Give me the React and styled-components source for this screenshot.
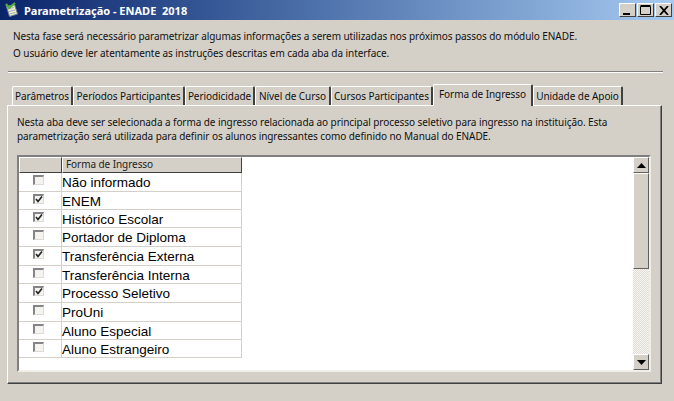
import React from "react";
import styled, { createGlobalStyle } from "styled-components";

const GlobalStyle = createGlobalStyle`
  html, body { margin: 0; padding: 0; background: #d4d0c8; }
  * { box-sizing: border-box; }
`;

const Window = styled.div`
  width: 674px;
  height: 401px;
  overflow: hidden;
  background: #d4d0c8;
  font-family: "Noto Sans", Tahoma, sans-serif;
  font-size: 10px;
  letter-spacing: -0.07px;
  color: #111;
  display: flex;
  flex-direction: column;
`;

const TitleBar = styled.div`
  height: 20px;
  flex: none;
  display: flex;
  align-items: center;
  padding: 0 2px 0 4px;
  background: linear-gradient(90deg, #0a246a 0%, #4a6ea8 45%, #a6caf0 100%);
  color: #fff;
  font-weight: bold;
  font-size: 11px;
  letter-spacing: 0;
`;

const TitleText = styled.span`
  margin-left: 4px;
  flex: 1;
  white-space: pre;
`;

const WinButtons = styled.div`
  display: flex;
  gap: 1px;
`;

const WinButton = styled.div`
  width: 17px;
  height: 14px;
  background: #d4d0c8;
  border: 1px solid;
  border-color: #fff #404040 #404040 #fff;
  display: flex;
  align-items: center;
  justify-content: center;
`;

const Intro = styled.div`
  padding: 8px 13px 0;
  line-height: 17px;
  height: 51px;
  flex: none;
  white-space: nowrap;
`;

const Divider = styled.div`
  flex: none;
  margin: 0 11px 0 8px;
  height: 2px;
  background: #808080;
  border-bottom: 1px solid #fff;
`;

const TabArea = styled.div`
  flex: none;
  margin: 10px 12px 0 7px;
`;

const TabRow = styled.div`
  display: flex;
  height: 22px;
  align-items: flex-end;
  padding-left: 5px;
`;

const Tab = styled.div`
  width: ${(p) => p.$w}px;
  height: 19px;
  flex: none;
  background: #d4d0c8;
  border-top: 1px solid #fff;
  border-left: 1px solid #fff;
  border-right: 2px solid #404040;
  border-radius: 2px 2px 0 0;
  line-height: 18px;
  text-align: center;
  white-space: nowrap;
  position: relative;
  ${(p) => p.$active && "margin-bottom: -1px; line-height: 19px; height: 22px; z-index: 1;"}
`;

const Panel = styled.div`
  height: 279px;
  background: #d4d0c8;
  border: 1px solid;
  border-color: #fff #404040 #404040 #fff;
  box-shadow: inset -1px -1px 0 #808080;
  padding: 9px 10px 0 9px;
`;

const PanelText = styled.div`
  line-height: 14px;
  height: 40px;
  white-space: nowrap;
`;

const ListBox = styled.div`
  height: 217px;
  display: flex;
  background: #fff;
  border: 2px solid;
  border-color: #808080 #f0eee8 #f0eee8 #808080;
`;

const ListBody = styled.div`
  flex: 1;
  min-width: 0;
`;

const Grid = styled.div`
  width: 223px;
  display: grid;
  grid-template-columns: 43px 180px;
`;

const HeadCell = styled.div`
  height: 16px;
  background: #d4d0c8;
  border: 1px solid;
  border-color: #fff #404040 #404040 #fff;
  padding-left: 3px;
  line-height: 13px;
  color: #222;
`;

const CheckCell = styled.div`
  height: ${(p) => p.$h}px;
  border-bottom: 1px solid #d4d0c8;
  border-right: 1px solid #d4d0c8;
  display: flex;
  justify-content: center;
  padding: 2px 4px 0 0;
`;

const NameCell = styled.div`
  height: ${(p) => p.$h}px;
  border-bottom: 1px solid #d4d0c8;
  border-right: 1px solid #d4d0c8;
  font-family: "Liberation Sans", Arial, sans-serif;
  font-size: 13.5px;
  letter-spacing: 0;
  line-height: 20px;
  white-space: nowrap;
  color: #000;
`;

const Check = styled.div`
  width: 11px;
  height: 10px;
  background: #f4f3f0;
  border-style: solid;
  border-width: 2px 1px 1px 2px;
  border-color: #858585 #dedbd5 #dedbd5 #858585;
  display: flex;
  align-items: center;
  justify-content: center;
`;

const ScrollBar = styled.div`
  width: 16px;
  flex: none;
  display: flex;
  flex-direction: column;
  background: repeating-conic-gradient(#e0ddd6 0 25%, #f6f5f2 0 50%) 0 0 / 2px 2px;
`;

const ScrollButton = styled.div`
  height: 16px;
  flex: none;
  background: #d4d0c8;
  border: 1px solid;
  border-color: #fff #606060 #606060 #fff;
  display: flex;
  align-items: center;
  justify-content: center;
`;

const ScrollThumb = styled.div`
  height: 96px;
  flex: none;
  background: #d4d0c8;
  border: 1px solid;
  border-color: #fff #606060 #606060 #fff;
`;

const ScrollTrack = styled.div`
  flex: 1;
`;

const AppIcon = () => (
  <svg width="16" height="16" viewBox="0 0 16 16">
    <path d="M2.5 4.5l8-2 3 9.5-8 2.5z" fill="#f2ecc0" stroke="#6d7f9a" />
    <path d="M4 7l6-1.5M5 9.5l6-1.5M5.5 12l6-1.5" stroke="#9bb0c8" />
    <path d="M2 2l3 4 6-5" fill="none" stroke="#4fae3f" strokeWidth="2.2" />
  </svg>
);

const items = [
  ["Não informado", false, 19],
  ["ENEM", true, 18],
  ["Histórico Escolar", true, 18],
  ["Portador de Diploma", false, 19],
  ["Transferência Externa", true, 19],
  ["Transferência Interna", false, 18],
  ["Processo Seletivo", true, 19],
  ["ProUni", false, 19],
  ["Aluno Especial", false, 18],
  ["Aluno Estrangeiro", false, 18],
];

const tabs = [
  ["Parâmetros", 61],
  ["Períodos Participantes", 112],
  ["Periodicidade", 70],
  ["Nível de Curso", 76],
  ["Cursos Participantes", 102],
  ["Forma de Ingresso", 100, true],
  ["Unidade de Apoio", 90],
];

export default function App() {
  return (
    <Window>
      <GlobalStyle />
      <TitleBar>
        <AppIcon />
        <TitleText>Parametrização - ENADE  2018</TitleText>
        <WinButtons>
          <WinButton>
            <svg width="11" height="10"><rect x="1" y="8" width="7" height="2" fill="#000" /></svg>
          </WinButton>
          <WinButton>
            <svg width="11" height="10"><path d="M0.5 1.5h10v8h-10zM0.5 .5h10" fill="none" stroke="#000" /></svg>
          </WinButton>
          <WinButton>
            <svg width="10" height="9"><path d="M1 0l8 9M9 0l-8 9" stroke="#000" strokeWidth="1.8" /></svg>
          </WinButton>
        </WinButtons>
      </TitleBar>
      <Intro>
        Nesta fase será necessário parametrizar algumas informações a serem utilizadas nos próximos passos do módulo ENADE.
        <br />
        O usuário deve ler atentamente as instruções descritas em cada aba da interface.
      </Intro>
      <Divider />
      <TabArea>
        <TabRow>
          {tabs.map(([label, w, active]) => (
            <Tab key={label} $w={w} $active={active}>{label}</Tab>
          ))}
        </TabRow>
        <Panel>
          <PanelText>
            Nesta aba deve ser selecionada a forma de ingresso relacionada ao principal processo seletivo para ingresso na instituição. Esta
            <br />
            parametrização será utilizada para definir os alunos ingressantes como definido no Manual do ENADE.
          </PanelText>
          <ListBox>
            <ListBody>
              <Grid>
                <HeadCell />
                <HeadCell>Forma de Ingresso</HeadCell>
                {items.map(([name, checked, h]) => (
                  <React.Fragment key={name}>
                    <CheckCell $h={h}>
                      <Check>
                        {checked && (
                          <svg width="8" height="7"><path d="M1 3l2 2.5L7 .5" fill="none" stroke="#222" strokeWidth="1.6" /></svg>
                        )}
                      </Check>
                    </CheckCell>
                    <NameCell $h={h}>{name}</NameCell>
                  </React.Fragment>
                ))}
              </Grid>
            </ListBody>
            <ScrollBar>
              <ScrollButton>
                <svg width="9" height="5"><path d="M4.5 0L9 5H0z" fill="#000" /></svg>
              </ScrollButton>
              <ScrollThumb />
              <ScrollTrack />
              <ScrollButton>
                <svg width="9" height="5"><path d="M0 0h9L4.5 5z" fill="#000" /></svg>
              </ScrollButton>
            </ScrollBar>
          </ListBox>
        </Panel>
      </TabArea>
    </Window>
  );
}
